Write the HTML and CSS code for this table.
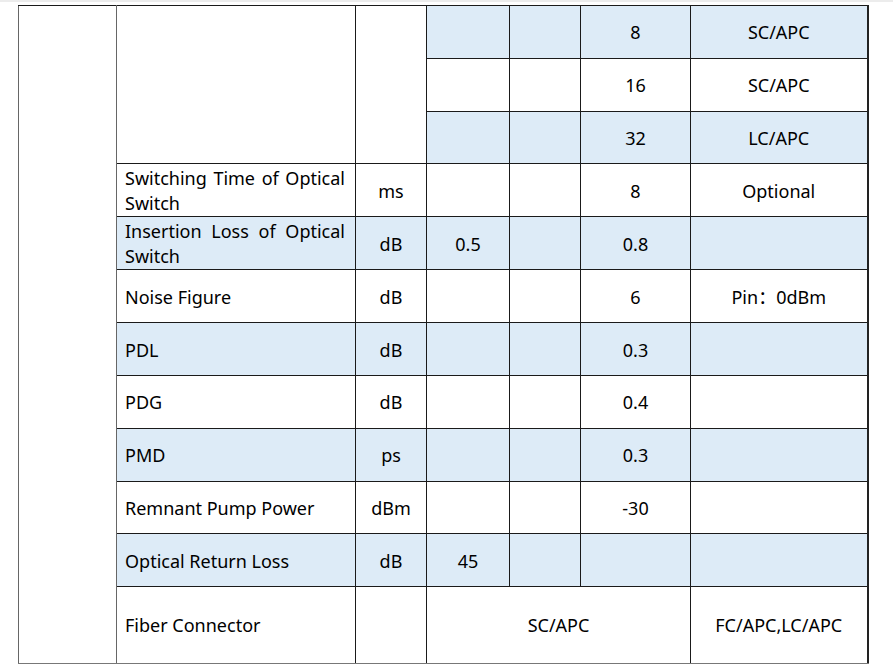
FILE: index.html
```html
<!DOCTYPE html>
<html>
<head>
<meta charset="utf-8">
<link rel="stylesheet" href="styles.css">
</head>
<body>
<div class="page">
<table class="spec">
  <colgroup>
    <col class="c-side"><col class="c-param"><col class="c-unit"><col class="c-min"><col class="c-typ"><col class="c-max"><col class="c-note">
  </colgroup>
  <tbody>
    <tr class="blue">
      <td class="side" rowspan="12"></td>
      <td class="param white g-left" rowspan="3"></td>
      <td class="unit white" rowspan="3"></td>
      <td></td><td class="g-left"></td><td class="g-left">8</td><td>SC/APC</td>
    </tr>
    <tr class="g-top">
      <td></td><td class="g-left"></td><td class="g-left">16</td><td>SC/APC</td>
    </tr>
    <tr class="blue g-top">
      <td></td><td class="g-left"></td><td class="g-left">32</td><td>LC/APC</td>
    </tr>
    <tr>
      <td class="param g-left">Switching Time of Optical Switch</td><td>ms</td><td></td><td class="g-left"></td><td class="g-left">8</td><td>Optional</td>
    </tr>
    <tr class="blue">
      <td class="param g-left">Insertion Loss of Optical Switch</td><td>dB</td><td>0.5</td><td class="g-left"></td><td class="g-left">0.8</td><td></td>
    </tr>
    <tr>
      <td class="param g-left">Noise Figure</td><td>dB</td><td></td><td class="g-left"></td><td class="g-left">6</td><td>Pin：0dBm</td>
    </tr>
    <tr class="blue g-top">
      <td class="param g-left">PDL</td><td>dB</td><td></td><td class="g-left"></td><td class="g-left">0.3</td><td></td>
    </tr>
    <tr class="g-top">
      <td class="param g-left">PDG</td><td>dB</td><td></td><td class="g-left"></td><td class="g-left">0.4</td><td></td>
    </tr>
    <tr class="blue g-top">
      <td class="param g-left">PMD</td><td>ps</td><td></td><td class="g-left"></td><td class="g-left">0.3</td><td></td>
    </tr>
    <tr>
      <td class="param g-left">Remnant Pump Power</td><td>dBm</td><td></td><td class="g-left"></td><td class="g-left">-30</td><td></td>
    </tr>
    <tr class="blue">
      <td class="param g-left">Optical Return Loss</td><td>dB</td><td>45</td><td class="g-left"></td><td class="g-left"></td><td></td>
    </tr>
    <tr class="tall">
      <td class="param g-left">Fiber Connector</td><td></td><td colspan="3">SC/APC</td><td>FC/APC,LC/APC</td>
    </tr>
  </tbody>
</table>
</div>
</body>
</html>
```

FILE: styles.css
```css
html, body {
  margin: 0;
  padding: 0;
  background: #ffffff;
}

.page {
  padding: 3px 0 0 18px;
  border-top: 2px solid #ececec;
}

.spec {
  border-collapse: collapse;
  table-layout: fixed;
  width: 850px;
  font-family: "Noto Sans", "Noto Sans CJK SC", sans-serif;
  font-size: 18px;
  line-height: 25px;
  color: #000;
}

.c-side { width: 98px; }
.c-param { width: 239px; }
.c-unit { width: 71px; }
.c-min { width: 83px; }
.c-typ { width: 71px; }
.c-max { width: 110px; }
.c-note { width: 177px; }

.spec td {
  border: 1px solid #1a1a1a;
  height: 52.8px;
  padding: 2px 8px 0;
  text-align: center;
  vertical-align: middle;
  box-sizing: border-box;
  background: #ffffff;
}

.spec tr.blue td {
  background: #ddebf7;
}

.spec tr.blue td.white,
.spec tr td.side {
  background: #ffffff;
}

.spec tr td.side {
  border-left: 1px solid #666;
  border-right: 1px solid #666;
  border-bottom: 2px solid #777;
}

.spec td.param {
  text-align: justify;
  padding: 2px 10px 0 8px;
}

.spec td.g-left {
  border-left-color: #666;
}

.spec tr.g-top td {
  border-top-color: #666;
}

.spec tr.tall td {
  height: 77px;
  border-bottom: 2px solid #777;
}

.spec td:last-child {
  border-right: 2px solid #222;
}
```
